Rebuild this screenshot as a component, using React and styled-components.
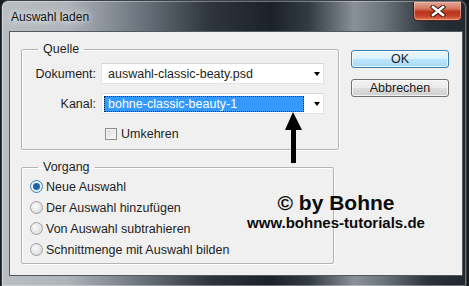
import styled, { createGlobalStyle } from 'styled-components';

const Global = createGlobalStyle`
  html, body {
    margin: 0;
    padding: 0;
    background: #161a1f;
    overflow: hidden;
  }
  * { box-sizing: border-box; }
`

const Win = styled.div`
    width: 466px;
    height: 286px;
    margin-left: 1px;
    padding: 0 4px 0 7px;
    border: 1px solid #3a4148;
    border-bottom: none;
    border-radius: 7px 7px 0 0;
    background: linear-gradient(90deg, #b9bec3 0%, #aeb4ba 14%, #6b737c 30%, #2d343c 45%, #1c2229 58%, #323a42 66%, #8a9198 76%, #6d757d 82%, #2a3139 92%, #20272e 100%);
    box-shadow: inset 0 0 0 1px rgba(255,255,255,0.35);
    display: flex;
    flex-direction: column;
`

const TitleBar = styled.div`
    height: 30px;
    display: flex;
    justify-content: space-between;
    align-items: flex-start;
    padding-left: 2px;
`

const Title = styled.div`
    font-family: "Liberation Sans", Arial, sans-serif;
    font-size: 12px;
    color: #111;
    margin-top: 9px;
    text-shadow: 0 0 6px rgba(255,255,255,0.9), 0 0 10px rgba(255,255,255,0.7);
`

const CloseBtn = styled.div`
    width: 49px;
    height: 19px;
    margin-top: 1px;
    border: 1px solid #4a2018;
    border-top: none;
    border-radius: 0 0 5px 5px;
    background: linear-gradient(#e3a796 0%, #d77a63 35%, #b8321c 55%, #c8462c 80%, #e07a55 100%);
    box-shadow: inset 0 0 0 1px rgba(255,200,180,0.5);
    display: flex;
    align-items: center;
    justify-content: center;
`

const Client = styled.div`
    position: relative;
    width: 454px;
    height: 245px;
    background: #f0f0f0;
    border: 1px solid #505860;
    display: flex;
    padding: 10px 0 0 11px;
    font-family: "Liberation Sans", Arial, sans-serif;
    font-size: 12.5px;
    color: #1e1e1e;
`

const LeftCol = styled.div`
    display: flex;
    flex-direction: column;
    gap: 10px;
`

const GroupBox = styled.fieldset`
    margin: 0;
    padding: 0;
    width: ${p => p.$w}px;
    min-width: 0;
    border: 1px solid #b4b4b4;
    border-radius: 2px;
    box-shadow: inset 1px 1px 0 #fff, 1px 1px 0 #fff;
`

const Legend = styled.legend`
    margin-left: 16px;
    padding: 0 5px;
    font-size: 12.5px;
    line-height: 14px;
`

const FormGrid = styled.div`
    display: grid;
    grid-template-columns: 74px 223px;
    column-gap: 5px;
    row-gap: 9px;
    align-items: center;
    padding: 7px 0 8px 0;
`

const FieldLabel = styled.div`
    text-align: right;
`

const Select = styled.div`
    height: 21px;
    background: #fff;
    border: 1px solid #e4e4e4;
    border-top-color: #d6d6d6;
    display: flex;
    align-items: center;
    padding-left: ${p => p.$focus ? 2 : 6}px;
    padding-right: 3px;
`

const SelValue = styled.div`
    flex: 1;
    white-space: nowrap;
`

const Highlight = styled.div`
    width: 200px;
    height: 16px;
    background: #3399ff;
    color: #fff;
    border: 1px dotted #10243a;
    padding-left: 3px;
    line-height: 14px;
    white-space: nowrap;
`

const Arrow = styled.div`
    width: 0;
    height: 0;
    margin-left: auto;
    border-left: 3.5px solid transparent;
    border-right: 3.5px solid transparent;
    border-top: 4px solid #000;
`

const CheckRow = styled.label`
    grid-column: 2;
    display: flex;
    align-items: center;
    gap: 4px;
    padding-left: 4px;
    margin-top: 4px;
`

const CheckBox = styled.span`
    width: 12px;
    height: 12px;
    border: 1px solid #8e8f8f;
    background: linear-gradient(135deg, #dcdcdc, #fbfbfb);
    box-shadow: inset 0 0 0 1px #f4f4f4;
`

const RadioList = styled.div`
    display: flex;
    flex-direction: column;
    padding: 2px 0 3px 8px;
`

const RadioRow = styled.label`
    height: 21px;
    display: flex;
    align-items: center;
    gap: 3px;
`

const RadioDot = styled.span`
    width: 13px;
    height: 13px;
    border-radius: 50%;
    border: 1px solid ${p => p.$on ? '#3c7fb1' : '#a0a0a0'};
    background: ${p => p.$on
        ? 'radial-gradient(circle, #1f5fa8 0 2.5px, #4a8fd4 3.5px, #e8f2fa 4px)'
        : 'radial-gradient(circle at 40% 40%, #fafafa, #d4d4d4)'};
    display: inline-block;
`

const RightCol = styled.div`
    margin-left: 12px;
    padding-top: 8px;
    display: flex;
    flex-direction: column;
    gap: 11px;
`

const Button = styled.button`
    width: 98px;
    height: 18px;
    padding: 0;
    border: 1px solid ${p => p.$primary ? '#3c7fb1' : '#707070'};
    border-radius: 3px;
    font-family: "Liberation Sans", Arial, sans-serif;
    font-size: 12.5px;
    line-height: 14px;
    color: #1a1a1a;
    background: ${p => p.$primary
        ? 'linear-gradient(#eaf6fd, #d9f0fc 50%, #bee6fd 50%, #a7d9f5)'
        : 'linear-gradient(#f2f2f2, #ebebeb 50%, #dddddd 50%, #cfcfcf)'};
    box-shadow: inset 0 0 0 1px rgba(255,255,255,0.7);
`

const Watermark = styled.div`
    position: absolute;
    left: 226px;
    top: 160px;
    width: 200px;
    text-align: center;
    font-family: "Liberation Sans", Arial, sans-serif;
    font-weight: bold;
    color: #0c0c0c;
`

const Mark1 = styled.div`
    font-size: 21px;
    line-height: 22px;
`

const Mark2 = styled.div`
    font-size: 15px;
    line-height: 18px;
`

const Pointer = styled.svg`
    position: absolute;
    left: 274px;
    top: 79px;
`

const Bottom = styled.div`
    flex: 1;
`

const radios = ['Neue Auswahl', 'Der Auswahl hinzufügen', 'Von Auswahl subtrahieren', 'Schnittmenge mit Auswahl bilden'];

function App() {
    return (
        <Win>
            <Global />
            <TitleBar>
                <Title>Auswahl laden</Title>
                <CloseBtn>
                    <svg width="16" height="12" viewBox="0 0 16 12">
                        <path d="M3 2 L13 10 M13 2 L3 10" stroke="#3a1a12" strokeWidth="4.5" strokeLinecap="square" />
                        <path d="M3 2 L13 10 M13 2 L3 10" stroke="#fff" strokeWidth="2.6" strokeLinecap="square" />
                    </svg>
                </CloseBtn>
            </TitleBar>
            <Client>
                <LeftCol>
                    <GroupBox $w={318}>
                        <Legend>Quelle</Legend>
                        <FormGrid>
                            <FieldLabel>Dokument:</FieldLabel>
                            <Select>
                                <SelValue>auswahl-classic-beaty.psd</SelValue>
                                <Arrow />
                            </Select>
                            <FieldLabel>Kanal:</FieldLabel>
                            <Select $focus>
                                <Highlight>bohne-classic-beauty-1</Highlight>
                                <Arrow />
                            </Select>
                            <CheckRow>
                                <CheckBox />
                                Umkehren
                            </CheckRow>
                        </FormGrid>
                    </GroupBox>
                    <GroupBox $w={313}>
                        <Legend>Vorgang</Legend>
                        <RadioList>
                            {radios.map((r, i) => (
                                <RadioRow key={r}>
                                    <RadioDot $on={i === 0} />
                                    {r}
                                </RadioRow>
                            ))}
                        </RadioList>
                    </GroupBox>
                </LeftCol>
                <RightCol>
                    <Button $primary>OK</Button>
                    <Button>Abbrechen</Button>
                </RightCol>
                <Pointer width="20" height="53" viewBox="0 0 20 53">
                    <path d="M9 1 L18 19 L12 19 L12 52 L7 52 L7 19 L1 19 Z" fill="#000" />
                </Pointer>
                <Watermark>
                    <Mark1>© by Bohne</Mark1>
                    <Mark2>www.bohnes-tutorials.de</Mark2>
                </Watermark>
            </Client>
            <Bottom />
        </Win>
    )
}

export default App;
